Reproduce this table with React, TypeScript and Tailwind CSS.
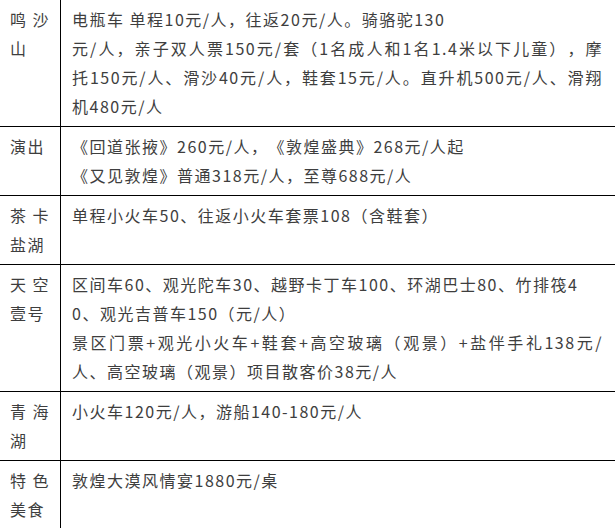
type Line = { text: string; justify?: boolean }

type Row = { label: Line[]; content: Line[] }

const rows: Row[] = [
  {
    label: [{ text: '鸣沙', justify: true }, { text: '山' }],
    content: [
      { text: '电瓶车 单程10元/人，往返20元/人。骑骆驼130' },
      { text: '元/人，亲子双人票150元/套（1名成人和1名1.4米以下儿童），摩', justify: true },
      { text: '托150元/人、滑沙40元/人，鞋套15元/人。直升机500元/人、滑翔', justify: true },
      { text: '机480元/人' },
    ],
  },
  {
    label: [{ text: '演出' }],
    content: [
      { text: '《回道张掖》260元/人，《敦煌盛典》268元/人起' },
      { text: '《又见敦煌》普通318元/人，至尊688元/人' },
    ],
  },
  {
    label: [{ text: '茶卡', justify: true }, { text: '盐湖' }],
    content: [{ text: '单程小火车50、往返小火车套票108（含鞋套）' }],
  },
  {
    label: [{ text: '天空', justify: true }, { text: '壹号' }],
    content: [
      { text: '区间车60、观光陀车30、越野卡丁车100、环湖巴士80、竹排筏4' },
      { text: '0、观光吉普车150（元/人）' },
      { text: '景区门票+观光小火车+鞋套+高空玻璃（观景）+盐伴手礼138元/', justify: true },
      { text: '人、高空玻璃（观景）项目散客价38元/人' },
    ],
  },
  {
    label: [{ text: '青海', justify: true }, { text: '湖' }],
    content: [{ text: '小火车120元/人，游船140-180元/人' }],
  },
  {
    label: [{ text: '特色', justify: true }, { text: '美食' }],
    content: [{ text: '敦煌大漠风情宴1880元/桌' }],
  },
]

const TextLine = ({ line }: { line: Line }) => (
  <div
    className={
      line.justify
        ? 'whitespace-nowrap text-justify [text-align-last:justify]'
        : 'whitespace-nowrap'
    }
  >
    {line.text}
  </div>
)

export default function App() {
  return (
    <div
      className="w-[615px] h-[528px] overflow-hidden bg-white text-[16px] leading-[29px] tracking-[1.5px] text-[#3e3e3e] [text-spacing-trim:space-all]"
      style={{ fontFamily: '"Noto Sans CJK SC", "Noto Sans", sans-serif' }}
    >
      {rows.map((row, i) => (
        <div key={i} className="flex border-b border-black">
          <div className="w-[61px] shrink-0 border-r border-black pl-[10px] pr-[10px] py-[5px]">
            {row.label.map((line, j) => (
              <TextLine key={j} line={line} />
            ))}
          </div>
          <div className="flex-1 min-w-0 pl-[11px] pr-[12px] py-[5px]">
            {row.content.map((line, j) => (
              <TextLine key={j} line={line} />
            ))}
          </div>
        </div>
      ))}
    </div>
  )
}
